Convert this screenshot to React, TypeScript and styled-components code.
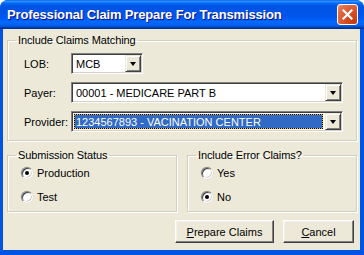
import React from "react";
import styled, { createGlobalStyle } from "styled-components";

const GlobalStyle = createGlobalStyle`
  html, body {
    margin: 0;
    padding: 0;
    background: #ffffff;
  }
  body {
    font-family: "Liberation Sans", Arial, sans-serif;
    font-size: 11px;
    color: #000000;
  }
`;

const Window = styled.div`
  width: 364px;
  height: 255px;
  display: flex;
  flex-direction: column;
  background: #0054e3;
  border-radius: 8px 8px 0 0;
  overflow: hidden;
  box-sizing: border-box;
`;

const TitleBar = styled.div`
  height: 29px;
  flex: none;
  display: flex;
  align-items: center;
  justify-content: space-between;
  padding: 0 6px 0 7px;
  background: linear-gradient(
    to bottom,
    #0058ee 0%,
    #3593ff 4%,
    #288eff 6%,
    #127dff 8%,
    #036ffc 10%,
    #0262ee 14%,
    #0057e5 20%,
    #0054e3 24%,
    #0055eb 56%,
    #005bf5 66%,
    #026afe 76%,
    #0062ef 86%,
    #0052d6 92%,
    #0040ab 94%,
    #003092 100%
  );
`;

const TitleText = styled.span`
  color: #ffffff;
  font-family: "Liberation Sans", Arial, sans-serif;
  font-weight: bold;
  font-size: 13px;
  letter-spacing: -0.15px;
  text-shadow: 1px 1px #0f1089;
`;

const CloseButton = styled.button`
  width: 21px;
  height: 21px;
  padding: 0;
  border: 1px solid #ffffff;
  border-radius: 3px;
  background: radial-gradient(
    circle at 85% 85%,
    #c23c10 0%,
    #d9522a 45%,
    #e2704a 80%,
    #eb9a7c 100%
  );
  display: flex;
  align-items: center;
  justify-content: center;
`;

const Body = styled.div`
  flex: 1;
  margin: 0 4px 5px 3px;
  background: #ece9d8;
  padding: 5px 3px 0 4px;
  display: flex;
  flex-direction: column;
`;

const Group = styled.fieldset`
  margin: 0;
  padding: 0;
  min-width: 0;
  border: 1px solid #d0d0bf;
  border-radius: 0;
  box-shadow: 1px 1px 0 #ffffff, inset 1px 1px 0 #ffffff;
`;

const Legend = styled.legend`
  margin-left: 8px;
  padding: 0 2px;
  font-size: 11px;
  line-height: 13px;
  letter-spacing: -0.1px;
`;

const MatchRows = styled.div`
  display: grid;
  grid-template-columns: 47px 1fr;
  row-gap: 8px;
  align-items: center;
  padding: 6px 13px 8px 16px;
`;

const FieldLabel = styled.span`
  font-size: 11px;
`;

const Combo = styled.div<{ $width?: number }>`
  width: ${(p) => (p.$width ? `${p.$width}px` : "auto")};
  height: 21px;
  box-sizing: border-box;
  display: flex;
  align-items: stretch;
  padding: 1px;
  background: #ffffff;
  border: 1px solid;
  border-color: #808080 #ffffff #ffffff #808080;
  box-shadow: inset 1px 1px 0 #404040, inset -1px -1px 0 #d4d0c8;
`;

const ComboText = styled.div<{ $selected?: boolean }>`
  flex: 1;
  display: flex;
  align-items: center;
  margin: ${(p) => (p.$selected ? "1px 2px 1px 1px" : "0")};
  padding-left: ${(p) => (p.$selected ? "1px" : "3px")};
  white-space: nowrap;
  overflow: hidden;
  font-size: 11px;
  color: ${(p) => (p.$selected ? "#ffffff" : "#000000")};
  border: ${(p) => (p.$selected ? "1px dotted #000000" : "none")};
  background: ${(p) =>
    p.$selected
      ? "linear-gradient(#316ac5, #316ac5) padding-box, #e8b428 border-box"
      : "transparent"};
`;

const ArrowButton = styled.div`
  width: 16px;
  flex: none;
  box-sizing: border-box;
  background: #ece9d8;
  border: 1px solid;
  border-color: #ece9d8 #404040 #404040 #ece9d8;
  box-shadow: inset 1px 1px 0 #ffffff, inset -1px -1px 0 #808080;
  display: flex;
  align-items: center;
  justify-content: center;
  &::after {
    content: "";
    width: 0;
    height: 0;
    border-left: 3.5px solid transparent;
    border-right: 3.5px solid transparent;
    border-top: 4px solid #000000;
    margin-top: 1px;
  }
`;

const GroupRow = styled.div`
  display: grid;
  grid-template-columns: 1fr 1fr;
  column-gap: 10px;
  margin-top: 8px;
`;

const RadioList = styled.div`
  display: flex;
  flex-direction: column;
  gap: 9px;
  padding: 3px 0 7px 13px;
`;

const RadioRow = styled.label`
  display: flex;
  align-items: center;
  gap: 4px;
  height: 15px;
  font-size: 11px;
`;

const RadioDot = styled.span<{ $checked?: boolean }>`
  width: 12px;
  height: 12px;
  box-sizing: border-box;
  border-radius: 50%;
  background: #ffffff;
  border: 1px solid;
  border-color: #808080 #ffffff #ffffff #808080;
  box-shadow: inset 1px 1px 0 #404040, inset -1px -1px 0 #d4d0c8,
    0 0 0 0.5px #d8d4c4;
  display: flex;
  align-items: center;
  justify-content: center;
  &::after {
    content: "";
    width: 4px;
    height: 4px;
    border-radius: 50%;
    background: ${(p) => (p.$checked ? "#000000" : "transparent")};
  }
`;

const ButtonRow = styled.div`
  display: flex;
  justify-content: flex-end;
  gap: 9px;
  margin-top: 8px;
  padding-right: 3px;
`;

const PushButton = styled.button<{ $width: number }>`
  width: ${(p) => p.$width}px;
  height: 23px;
  padding: 0;
  font-family: "Liberation Sans", Arial, sans-serif;
  font-size: 11px;
  color: #000000;
  background: #ece9d8;
  border: 1px solid;
  border-color: #ffffff #404040 #404040 #ffffff;
  box-shadow: inset -1px -1px 0 #808080, inset 1px 1px 0 #f4f2e8;
  border-radius: 0;
`;

const Mnemonic = styled.span`
  text-decoration: underline;
`;

const CloseIcon = () => (
  <svg width="11" height="11" viewBox="0 0 11 11">
    <path
      d="M1.5 1.5 L9.5 9.5 M9.5 1.5 L1.5 9.5"
      stroke="#ffffff"
      strokeWidth="2.2"
      strokeLinecap="square"
    />
  </svg>
);

type ComboProps = { value: string; width?: number; selected?: boolean };

const ComboBox: React.FC<ComboProps> = ({ value, width, selected }) => (
  <Combo $width={width}>
    <ComboText $selected={selected}>{value}</ComboText>
    <ArrowButton />
  </Combo>
);

const Radio: React.FC<{ label: string; checked?: boolean }> = ({
  label,
  checked,
}) => (
  <RadioRow>
    <RadioDot $checked={checked} />
    {label}
  </RadioRow>
);

export default function App() {
  return (
    <>
      <GlobalStyle />
      <Window>
        <TitleBar>
          <TitleText>Professional Claim Prepare For Transmission</TitleText>
          <CloseButton aria-label="Close">
            <CloseIcon />
          </CloseButton>
        </TitleBar>
        <Body>
          <Group>
            <Legend>Include Claims Matching</Legend>
            <MatchRows>
              <FieldLabel>LOB:</FieldLabel>
              <ComboBox value="MCB" width={72} />
              <FieldLabel>Payer:</FieldLabel>
              <ComboBox value="00001 - MEDICARE PART B" />
              <FieldLabel>Provider:</FieldLabel>
              <ComboBox value="1234567893 - VACINATION CENTER" selected />
            </MatchRows>
          </Group>
          <GroupRow>
            <Group>
              <Legend>Submission Status</Legend>
              <RadioList>
                <Radio label="Production" checked />
                <Radio label="Test" />
              </RadioList>
            </Group>
            <Group>
              <Legend>Include Error Claims?</Legend>
              <RadioList>
                <Radio label="Yes" />
                <Radio label="No" checked />
              </RadioList>
            </Group>
          </GroupRow>
          <ButtonRow>
            <PushButton $width={99}>
              <Mnemonic>P</Mnemonic>repare Claims
            </PushButton>
            <PushButton $width={71}>
              <Mnemonic>C</Mnemonic>ancel
            </PushButton>
          </ButtonRow>
        </Body>
      </Window>
    </>
  );
}
